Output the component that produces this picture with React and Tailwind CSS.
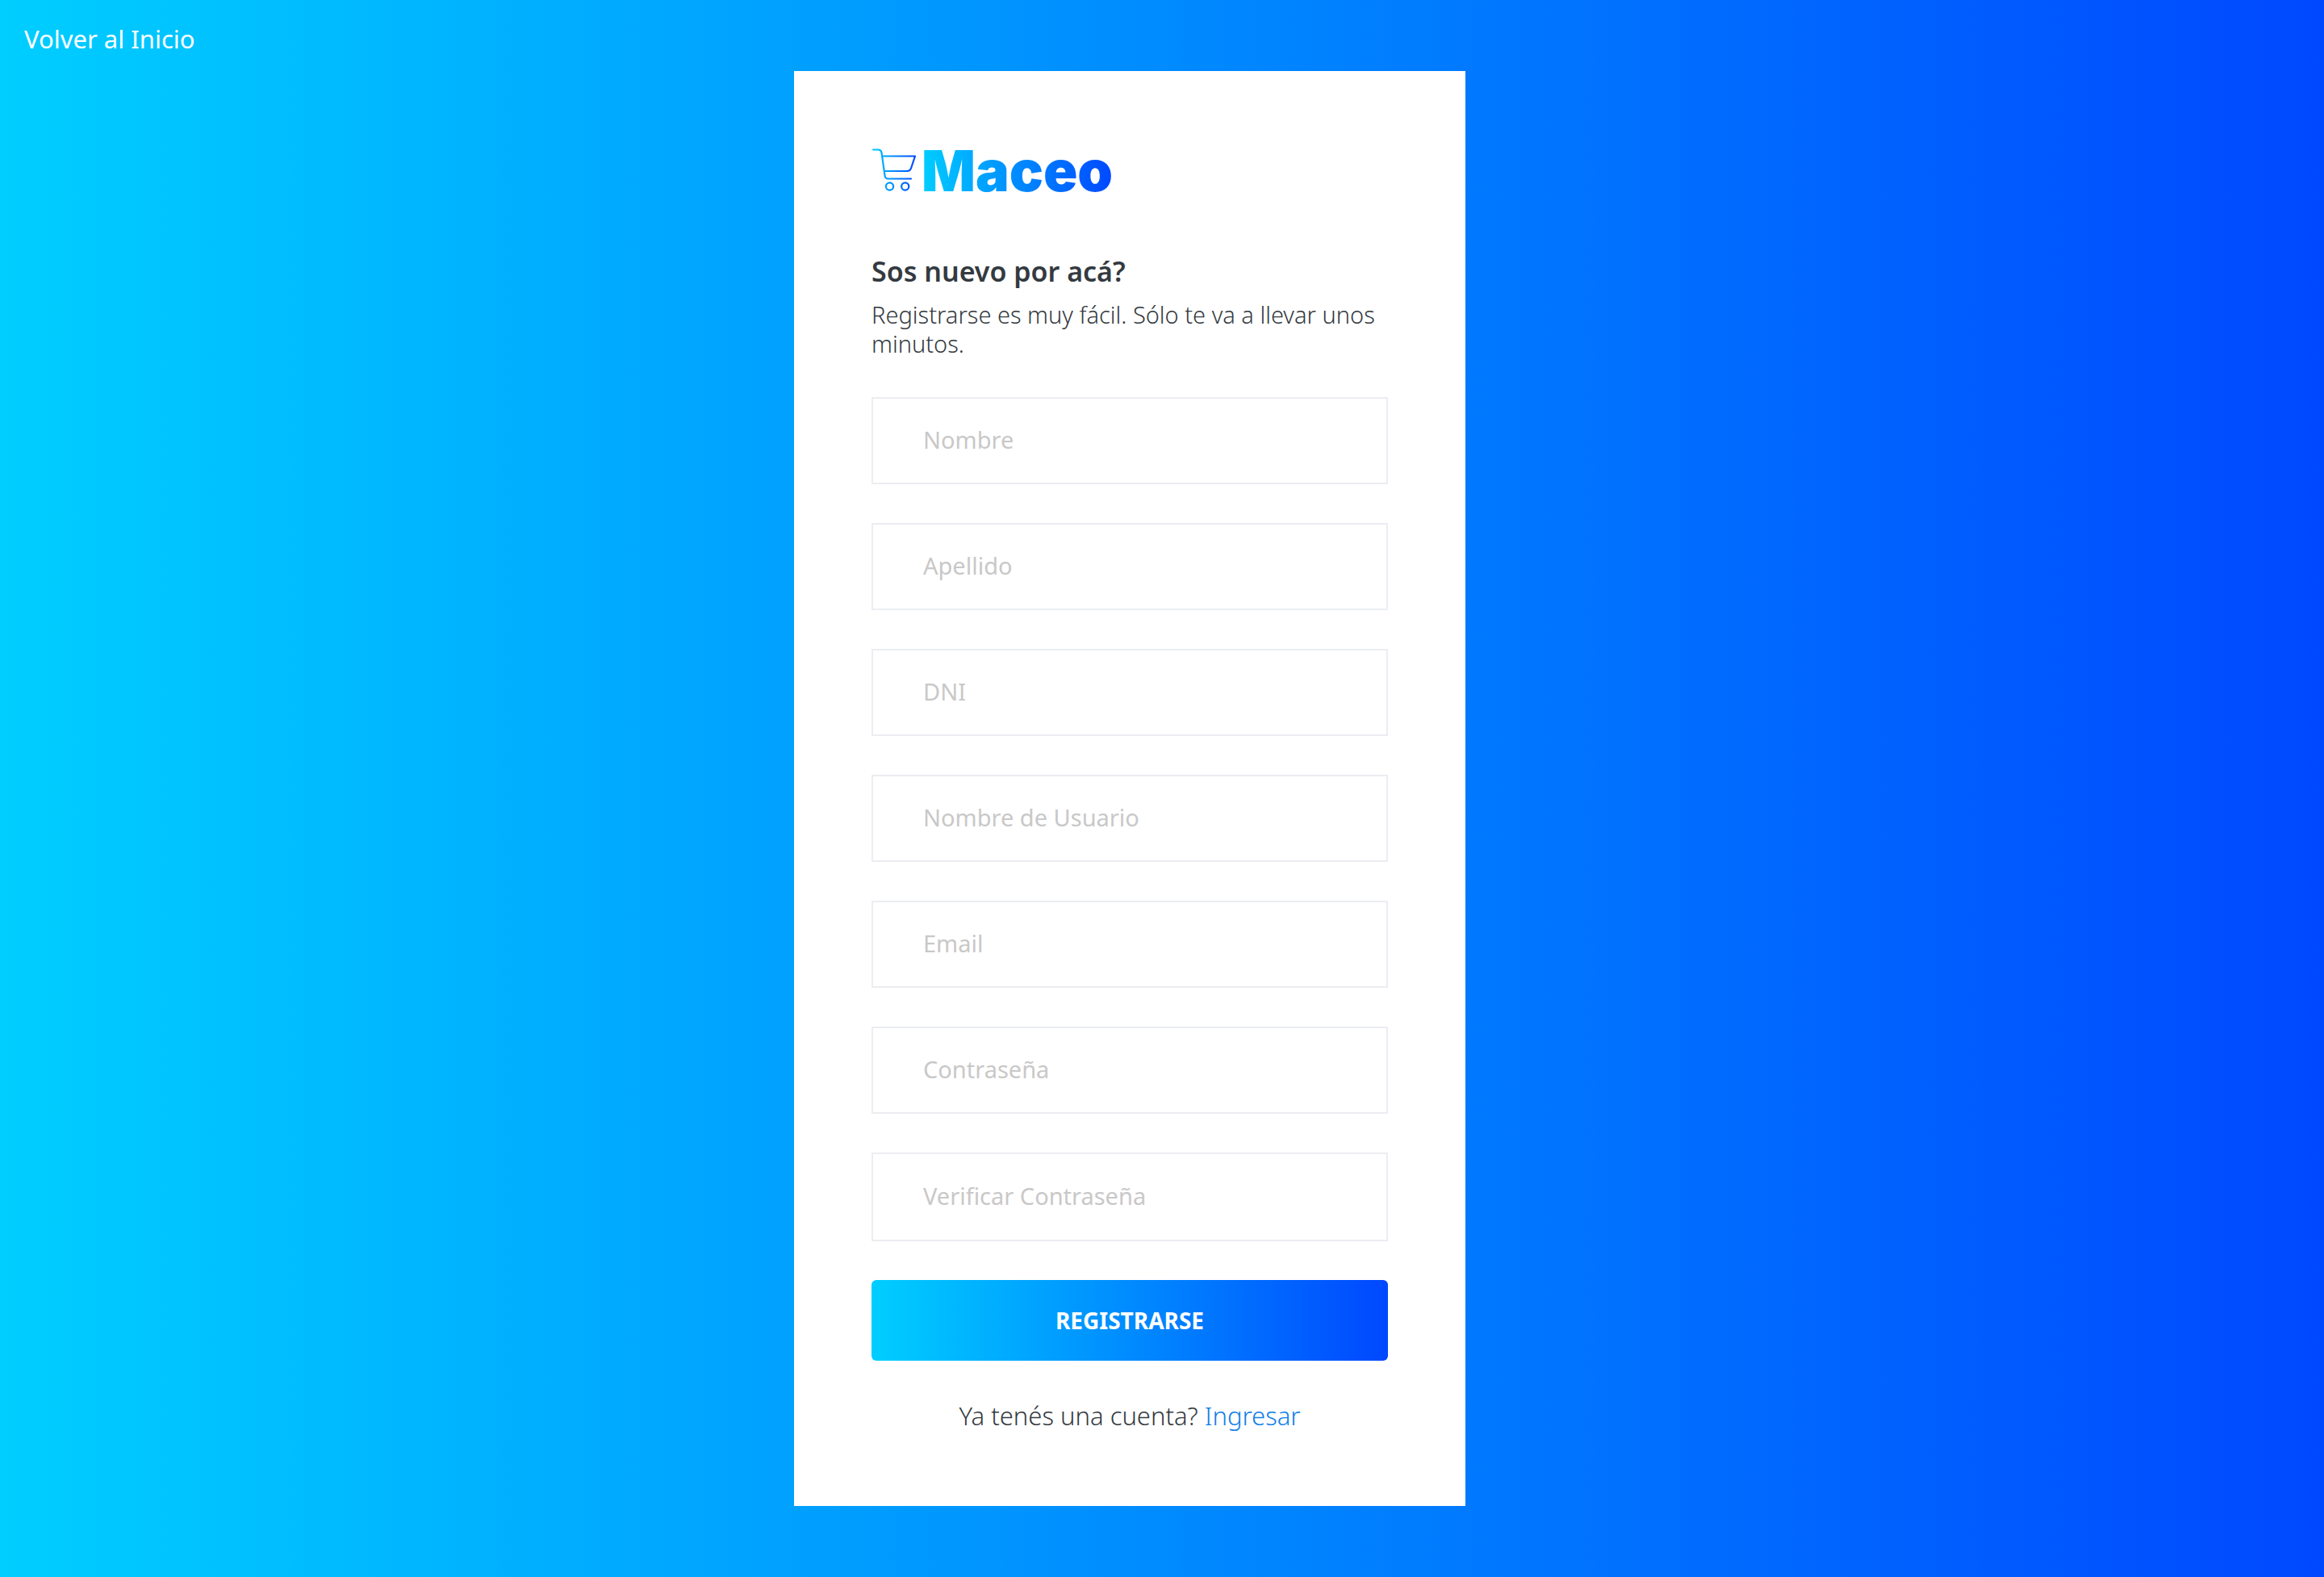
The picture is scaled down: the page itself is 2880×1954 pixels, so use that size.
import React from "react";

const fields = [
  { id: "nombre", label: "Nombre", type: "text" },
  { id: "apellido", label: "Apellido", type: "text" },
  { id: "dni", label: "DNI", type: "text" },
  { id: "usuario", label: "Nombre de Usuario", type: "text" },
  { id: "email", label: "Email", type: "email" },
  { id: "contrasena", label: "Contraseña", type: "password" },
  { id: "verificar", label: "Verificar Contraseña", type: "password" },
];

function CartIcon() {
  return (
    <svg viewBox="0 2 56 56" className="h-14 w-14 shrink-0" fill="none" stroke="url(#cart)" strokeWidth="2.2" strokeLinecap="round" strokeLinejoin="round" aria-hidden="true">
      <defs>
        <linearGradient id="cart" gradientUnits="userSpaceOnUse" x1="0" y1="0" x2="54" y2="0">
          <stop offset="0" stopColor="#00ceff" />
          <stop offset="1" stopColor="#0048ff" />
        </linearGradient>
      </defs>
      <path d="M2 3.5h6.5c2.4 0 3.6 1.4 4 3.6l4 28.5c.4 2.4 1.7 3.9 4 3.9H49" />
      <path d="M13.5 11.5H54l-5 15c-.8 2.3-2.2 3.5-4.6 3.5H16" />
      <circle cx="22.5" cy="49" r="4.6" />
      <circle cx="41.7" cy="49" r="4.6" />
    </svg>
  );
}

export default function App() {
  return (
    <div className="flex min-h-screen flex-col bg-linear-to-r/srgb from-[#00ceff] to-[#0048ff] font-['Noto_Sans',sans-serif] text-[#343a40]">
      <header className="flex h-22 items-center px-[30px] pt-2">
        <a href="#inicio" className="text-[31px] leading-10 text-white">Volver al Inicio</a>
      </header>
      <main className="flex flex-1 items-start justify-center pr-20 pb-22">
        <section className="w-full max-w-208 bg-white px-24 py-23">
          <div className="flex h-16 items-center gap-[6px]">
            <CartIcon />
            <span className="bg-linear-to-r/srgb from-[#00ceff] to-[#0048ff] bg-clip-text font-['Inter',sans-serif] text-[70px] leading-18 font-black text-transparent">Maceo</span>
          </div>
          <h1 className="mt-17 text-[34px] leading-12 font-semibold">Sos nuevo por acá?</h1>
          <p className="mt-3 text-[29px] leading-9 font-light">Registrarse es muy fácil. Sólo te va a llevar unos minutos.</p>
          <form className="mt-12 flex flex-col gap-12" onSubmit={(e) => e.preventDefault()}>
            {fields.map((f) => (
              <input
                key={f.id}
                id={f.id}
                name={f.id}
                type={f.type}
                aria-label={f.label}
                placeholder={f.label}
                className="h-27 w-full border-2 border-[#ebedf2] px-[62px] pb-1 text-[29px] placeholder:text-[#c9c8c8] last-of-type:h-[110px]"
              />
            ))}
            <button type="submit" className="h-25 rounded-md bg-linear-to-r/srgb from-[#00ceff] to-[#0048ff] text-[28px] font-bold text-white">REGISTRARSE</button>
          </form>
          <p className="mt-12 text-center text-[31px] leading-10 font-light">
            Ya tenés una cuenta? <a href="#ingresar" className="text-[#1080e8]">Ingresar</a>
          </p>
        </section>
      </main>
    </div>
  );
}
